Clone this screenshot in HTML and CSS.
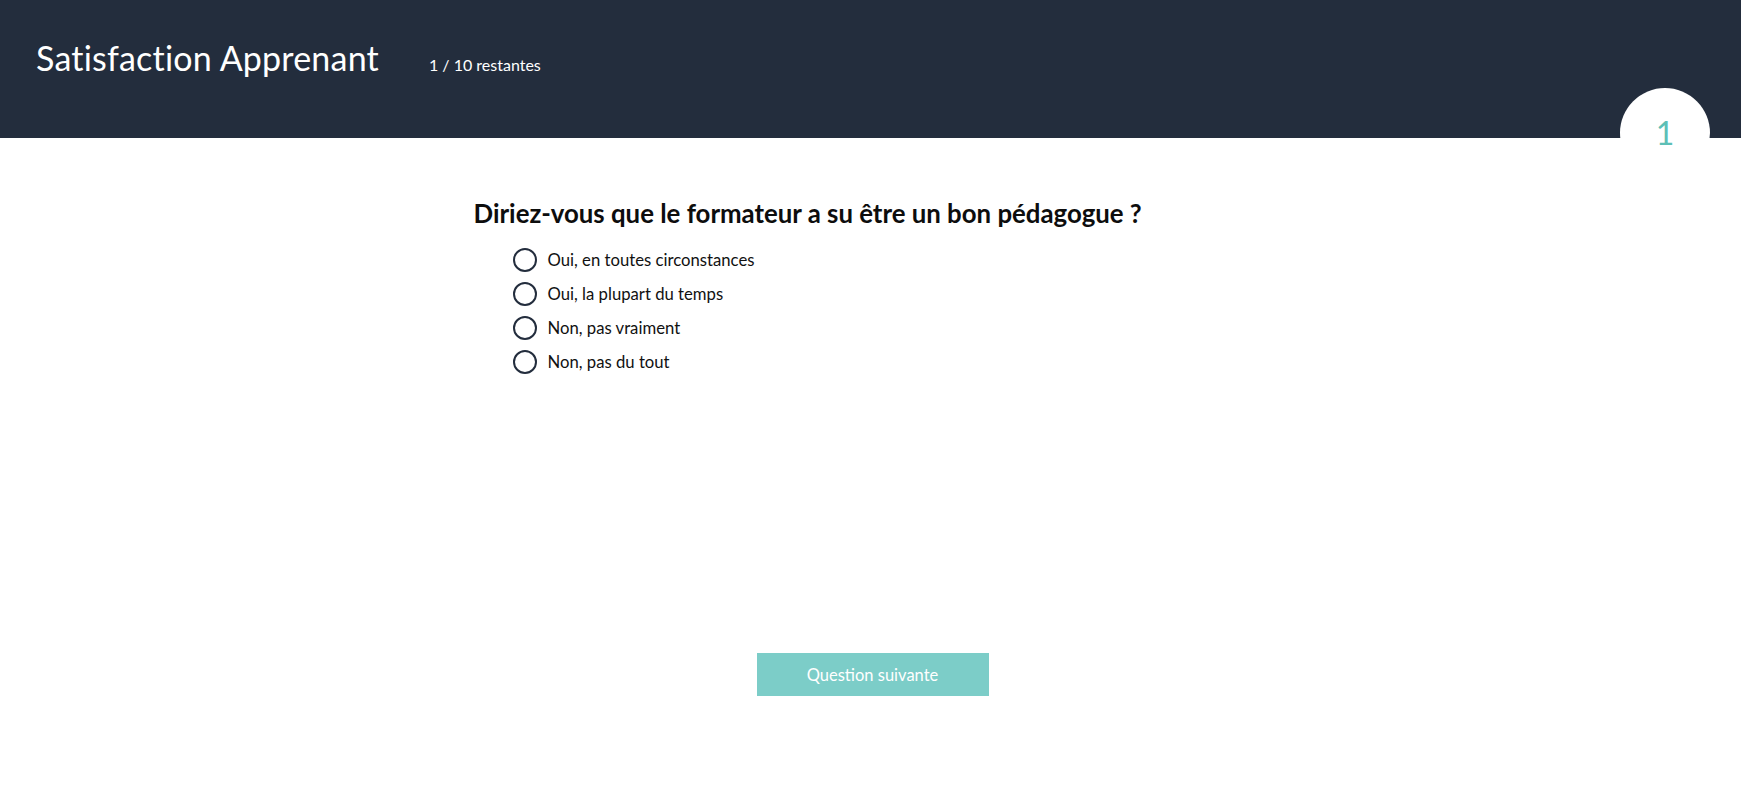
FILE: index.html
```html
<!DOCTYPE html>
<html lang="fr">
<head>
<meta charset="utf-8">
<title>Satisfaction Apprenant</title>
<link rel="stylesheet" href="styles.css">
</head>
<body>
<header class="topbar">
  <h1 class="title">Satisfaction Apprenant</h1>
  <span class="counter">1 / 10 restantes</span>
  <div class="badge">1</div>
</header>
<main class="content">
  <section class="question">
    <h2 class="question-text">Diriez-vous que le formateur a su être un bon pédagogue ?</h2>
    <ul class="options">
      <li class="option"><span class="radio"></span><span class="label">Oui, en toutes circonstances</span></li>
      <li class="option"><span class="radio"></span><span class="label">Oui, la plupart du temps</span></li>
      <li class="option"><span class="radio"></span><span class="label">Non, pas vraiment</span></li>
      <li class="option"><span class="radio"></span><span class="label">Non, pas du tout</span></li>
    </ul>
  </section>
  <div class="actions">
    <button class="next">Question suivante</button>
  </div>
</main>
</body>
</html>
```
FILE: styles.css
```css
* { box-sizing: border-box; }
html, body { margin: 0; padding: 0; background: #fff; }
body { font-family: "Lato", "Noto Sans", sans-serif; color: #111; }

.topbar {
  position: relative;
  height: 138px;
  background: #232d3d;
  color: #fff;
  display: flex;
  align-items: baseline;
  padding: 36px 0 0 36px;
}
.title {
  margin: 0;
  font-size: 34px;
  font-weight: 400;
  line-height: 44px;
  letter-spacing: 0.2px;
}
.counter {
  margin-left: 50px;
  font-size: 16px;
  font-weight: 400;
}
.badge {
  position: absolute;
  left: 1620px;
  top: 88px;
  width: 90px;
  height: 90px;
  border-radius: 50%;
  background: #fff;
  color: #5dbfb6;
  font-size: 32px;
  display: flex;
  align-items: center;
  justify-content: center;
  padding-bottom: 2px;
}

.content {
  width: 800px;
  margin: 0 auto;
  padding-top: 59px;
}
.question { padding-left: 3px; }
.question-text {
  margin: 0 0 19px 0;
  font-size: 25.8px;
  font-weight: 700;
  line-height: 32px;
  color: #0d0d0d;
}
.options {
  list-style: none;
  margin: 0;
  padding: 0 0 0 39px;
  display: flex;
  flex-direction: column;
  gap: 10px;
}
.option {
  display: flex;
  align-items: center;
  height: 24px;
  gap: 11px;
}
.radio {
  width: 24px;
  height: 24px;
  border: 2px solid #232d3d;
  border-radius: 50%;
  flex: none;
}
.label {
  font-size: 16.7px;
  color: #111;
}
.actions {
  display: flex;
  justify-content: center;
  margin-top: 279px;
  padding-left: 4px;
}
.next {
  width: 232px;
  height: 43px;
  border: 0;
  background: #7ccdc8;
  color: #fff;
  font-family: inherit;
  font-size: 16.5px;
}
```
